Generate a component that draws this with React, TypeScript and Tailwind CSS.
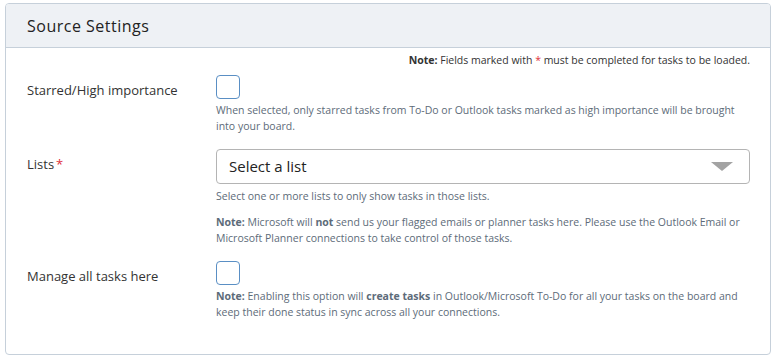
import React from "react";

function Checkbox() {
  return (
    <div className="w-[24px] h-[24px] rounded-[4px] border border-[#5a8fc4] bg-white" />
  );
}

function Row({
  label,
  required,
  children,
  className,
}: {
  label: string;
  required?: boolean;
  children: React.ReactNode;
  className?: string;
}) {
  return (
    <div className={"flex " + (className ?? "")}>
      <div className="w-[189px] shrink-0 text-[13px] text-[#333] pt-[6px]">
        {label}
        {required && <span className="text-[#e0303a] ml-[2px]">*</span>}
      </div>
      <div className="flex-1 min-w-0">{children}</div>
    </div>
  );
}

export default function App() {
  return (
    <div
      className="w-[776px] h-[361px] bg-white pt-[3px] px-[5px]"
      style={{ fontFamily: "'Open Sans', 'Liberation Sans', sans-serif" }}
    >
      <div className="border border-[#c6d0da] rounded-[4px] h-[352px] overflow-hidden">
        <div className="h-[44px] bg-[#eef1f5] border-b border-[#c6d0da] flex items-center px-[21px]">
          <h1 className="text-[16px] tracking-[0.5px] text-[#222]">Source Settings</h1>
        </div>
        <div className="pl-[21px] pr-[20px]">
          <p className="text-right text-[10.5px] text-[#333] mt-[5px] leading-[14px]">
            <span className="font-bold">Note:</span> Fields marked with{" "}
            <span className="text-[#e0303a]">*</span> must be completed for tasks to be loaded.
          </p>
          <Row label="Starred/High importance" className="mt-[8px]">
            <Checkbox />
            <p className="text-[10.5px] text-[#5d6b79] leading-[16px] mt-[3px]">
              When selected, only starred tasks from To-Do or Outlook tasks marked as high
              importance will be brought into your board.
            </p>
          </Row>
          <Row label="Lists" required className="mt-[15px]">
            <div className="h-[35px] rounded-[4px] border border-[#b4b4b4] flex items-center justify-between pl-[12px] pr-[16px]">
              <span className="text-[15px] text-[#222]">Select a list</span>
              <svg width="22" height="9" viewBox="0 0 22 9">
                <path d="M0 0 L22 0 L11 9 Z" fill="#a3a3a3" />
              </svg>
            </div>
            <p className="text-[10.5px] text-[#5d6b79] leading-[16px] mt-[4px]">
              Select one or more lists to only show tasks in those lists.
            </p>
            <p className="text-[10.5px] text-[#5d6b79] leading-[16px] mt-[10px]">
              <span className="font-bold">Note:</span> Microsoft will{" "}
              <span className="font-bold">not</span> send us your flagged emails or planner
              tasks here. Please use the Outlook Email or Microsoft Planner connections to take
              control of those tasks.
            </p>
          </Row>
          <Row label="Manage all tasks here" className="mt-[15px]">
            <Checkbox />
            <p className="text-[10.5px] text-[#5d6b79] leading-[16px] mt-[3px]">
              <span className="font-bold">Note:</span> Enabling this option will{" "}
              <span className="font-bold">create tasks</span> in Outlook/Microsoft To-Do for
              all your tasks on the board and keep their done status in sync across all your
              connections.
            </p>
          </Row>
        </div>
      </div>
    </div>
  );
}
